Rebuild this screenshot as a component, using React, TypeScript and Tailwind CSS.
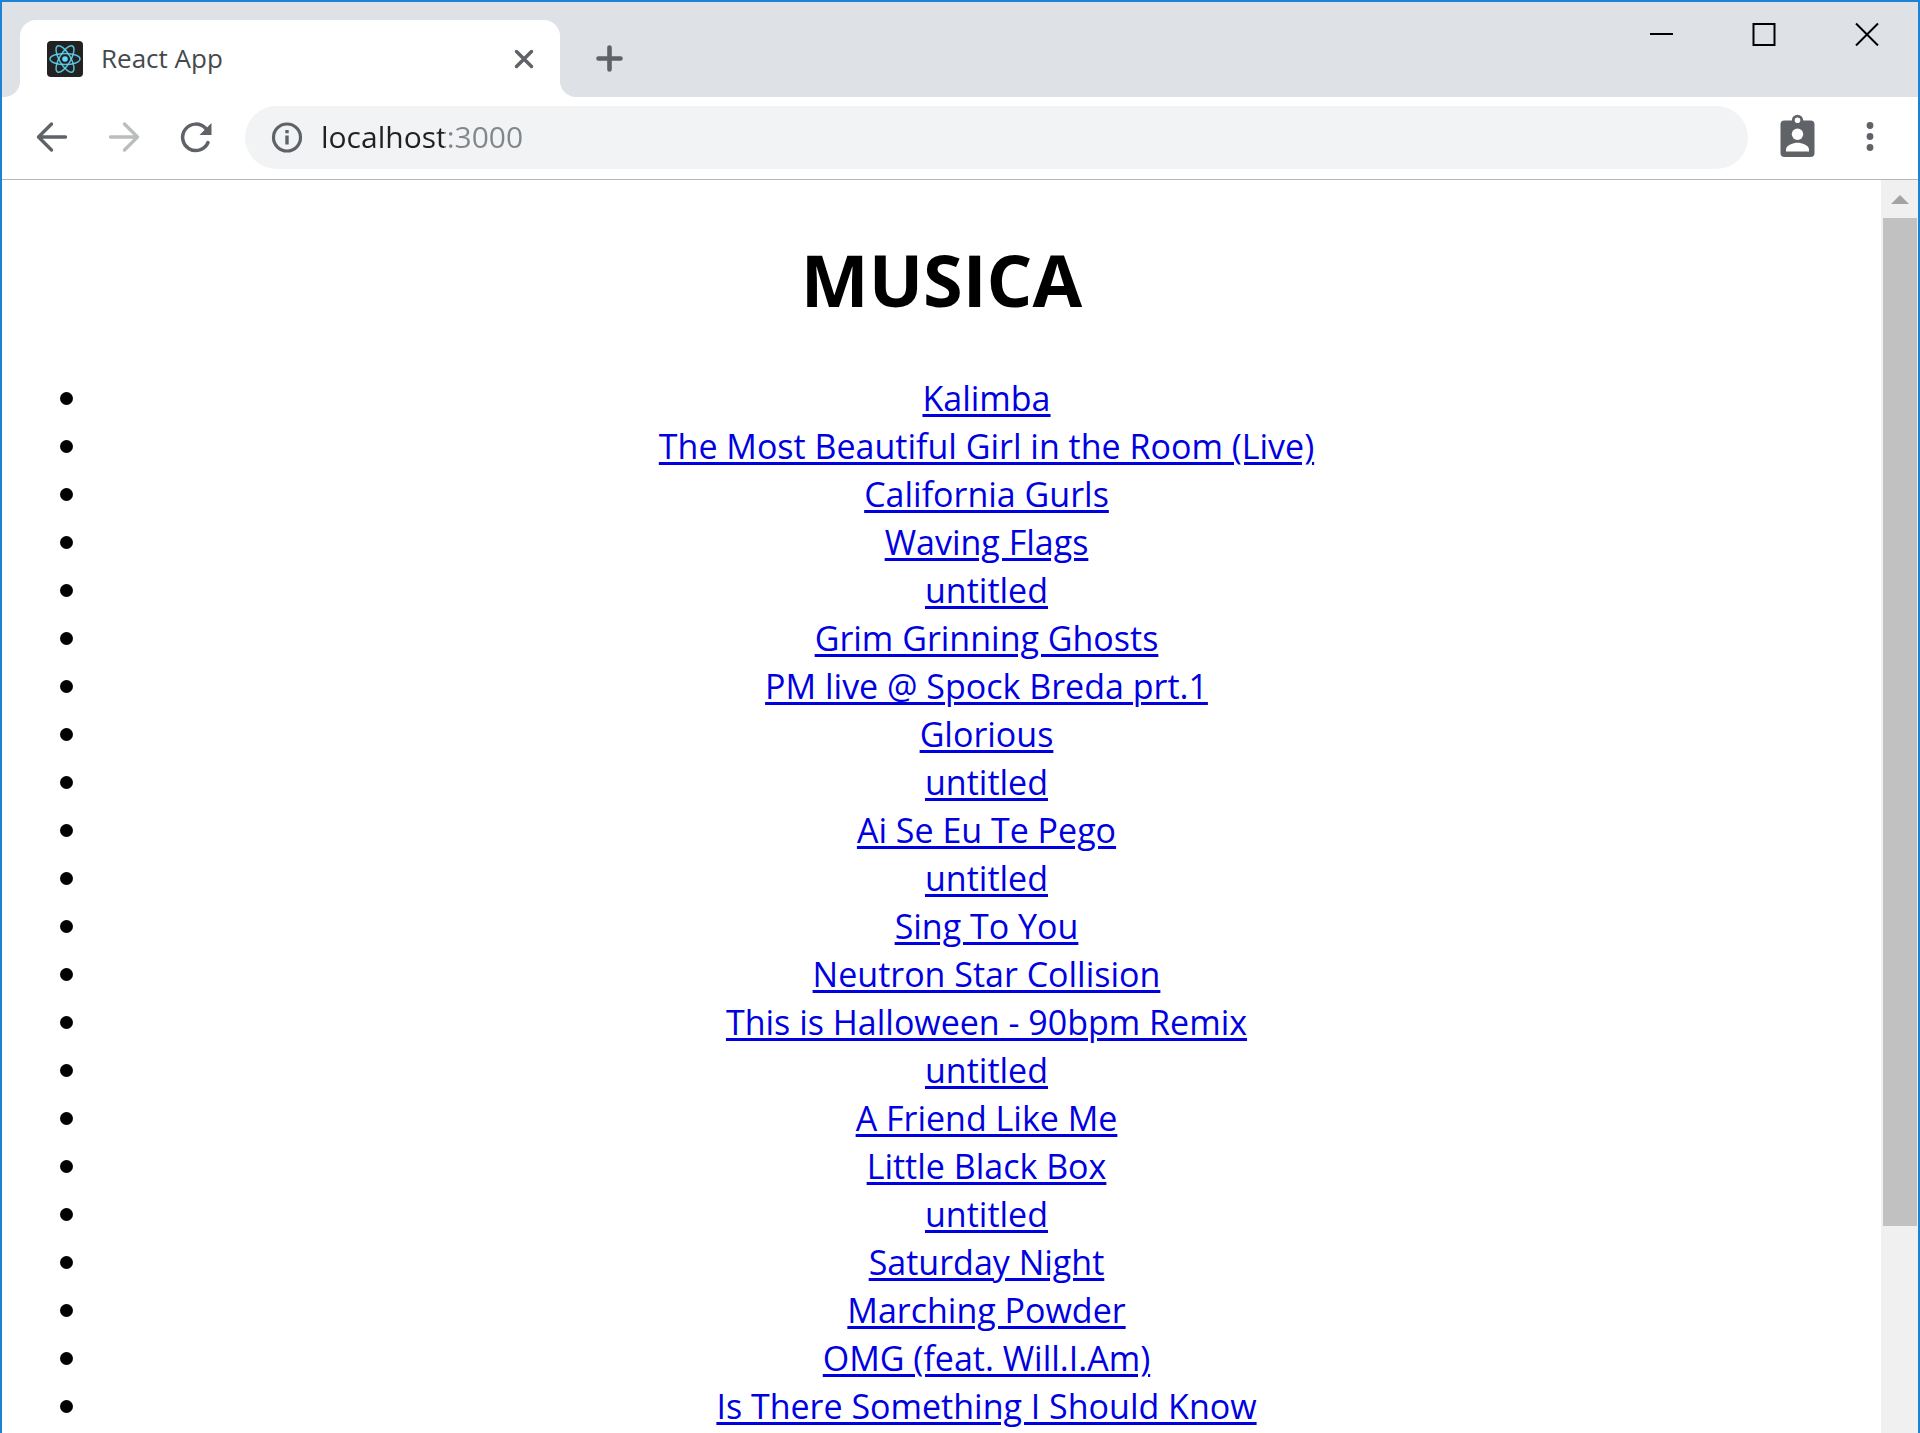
const songs = [
  'Kalimba',
  'The Most Beautiful Girl in the Room (Live)',
  'California Gurls',
  'Waving Flags',
  'untitled',
  'Grim Grinning Ghosts',
  'PM live @ Spock Breda prt.1',
  'Glorious',
  'untitled',
  'Ai Se Eu Te Pego',
  'untitled',
  'Sing To You',
  'Neutron Star Collision',
  'This is Halloween - 90bpm Remix',
  'untitled',
  'A Friend Like Me',
  'Little Black Box',
  'untitled',
  'Saturday Night',
  'Marching Powder',
  'OMG (feat. Will.I.Am)',
  'Is There Something I Should Know',
]

function ReactIcon() {
  return (
    <svg viewBox="0 0 36 36" className="size-9 shrink-0" aria-hidden="true">
      <rect width="36" height="36" rx="4" fill="#222222" />
      <g fill="none" stroke="#61dafb" strokeOpacity="0.85" strokeWidth="1.5">
        <ellipse cx="18" cy="18" rx="15" ry="5.6" />
        <ellipse cx="18" cy="18" rx="15" ry="5.6" transform="rotate(60 18 18)" />
        <ellipse cx="18" cy="18" rx="15" ry="5.6" transform="rotate(120 18 18)" />
      </g>
      <circle cx="18" cy="18" r="2.8" fill="#61dafb" />
    </svg>
  )
}

function TabStrip() {
  return (
    <header className="flex h-[95px] items-start bg-[#dee1e6]">
      <div className="w-[18px] self-stretch bg-white">
        <div className="h-full rounded-br-2xl bg-[#dee1e6]" />
      </div>
      <div className="flex flex-1 self-stretch bg-[linear-gradient(to_right,white_560px,#dee1e6_560px)]">
        <div className="w-[540px] bg-[#dee1e6] pt-[18px]">
          <div className="flex h-full items-center rounded-t-2xl bg-white pr-6 pl-[27px]">
            <ReactIcon />
            <span className="ml-[18px] flex-1 pb-0.5 text-[26px] leading-9 text-[#45494d]">React App</span>
            <button aria-label="Close tab" className="flex size-6 items-center justify-center">
              <svg viewBox="0 0 24 24" className="size-6" stroke="#5f6368" strokeWidth="3.500" strokeLinecap="round">
                <path d="M4.500 4.500l15 15M19.500 4.500l-15 15" />
              </svg>
            </button>
          </div>
        </div>
        <div className="flex flex-1 justify-between rounded-bl-2xl bg-[#dee1e6]">
          <button aria-label="New tab" className="mt-[41px] ml-[33px] size-8">
            <svg viewBox="0 0 32 32" className="size-8" stroke="#5f6368" strokeWidth="4.600" strokeLinecap="round">
              <path d="M16.500 4.500v22M5.500 15.500h22" />
            </svg>
          </button>
          <div className="flex h-16">
            <button aria-label="Minimize" className="flex w-[103px] items-center justify-center">
              <svg viewBox="0 0 24 24" className="size-6" fill="none" stroke="#000" strokeWidth="2">
                <path d="M0 12h23" />
              </svg>
            </button>
            <button aria-label="Maximize" className="flex w-[103px] items-center justify-center">
              <svg viewBox="0 0 24 24" className="size-6 overflow-visible" fill="none" stroke="#000" strokeWidth="2">
                <rect x="0.5" y="2" width="21" height="21" />
              </svg>
            </button>
            <button aria-label="Close window" className="flex w-[102px] items-center justify-center">
              <svg viewBox="0 0 24 24" className="size-6" fill="none" stroke="#000" strokeWidth="2">
                <path d="M1 1.500l22 22M23 1.500l-22 22" />
              </svg>
            </button>
          </div>
        </div>
      </div>
    </header>
  )
}

function Toolbar() {
  return (
    <nav className="flex h-[83px] items-center border-b border-[#b4b6b8] bg-white pb-0.5 pl-[30px]">
      <button aria-label="Back" className="size-10">
        <svg viewBox="0 0 40 40" className="size-10" fill="none" stroke="#5f6368" strokeWidth="3.400" strokeLinecap="round" strokeLinejoin="round">
          <path d="M33.500 20H7M19.500 7L6.500 20l13 13" />
        </svg>
      </button>
      <button aria-label="Forward" disabled className="ml-8 size-10">
        <svg viewBox="0 0 40 40" className="size-10" fill="none" stroke="#babcbe" strokeWidth="3.400" strokeLinecap="round" strokeLinejoin="round">
          <path d="M6.500 20H33M20.500 7l13 13-13 13" />
        </svg>
      </button>
      <button aria-label="Reload" className="ml-8 size-10">
        <svg viewBox="0 0 40 40" className="size-10" fill="none">
          <path d="M32 25.500A13.200 13.200 0 1 1 29.500 11.300" stroke="#5f6368" strokeWidth="3.500" strokeLinecap="round" />
          <path d="M35.500 6v12H23.500z" fill="#5f6368" />
        </svg>
      </button>
      <div className="ml-[29px] flex h-[63px] flex-1 items-center rounded-full bg-[#f1f3f4] pl-6">
        <button aria-label="View site information" className="size-9">
          <svg viewBox="0 0 36 36" className="size-9" fill="none">
            <circle cx="18" cy="18.500" r="13.500" stroke="#5f6368" strokeWidth="3.200" />
            <path d="M18 16.500v9M18 11v3.300" stroke="#5f6368" strokeWidth="3.400" />
          </svg>
        </button>
        <input
          aria-label="Address"
          defaultValue="localhost:3000"
          className="ml-4 min-w-0 flex-1 bg-[linear-gradient(to_right,#202124_123px,#80868b_123px)] bg-clip-text text-[30px] leading-10 text-transparent caret-black outline-none"
        />
      </div>
      <button aria-label="Profile" className="ml-7 size-11">
        <svg viewBox="0 0 44 44" className="size-11 overflow-visible" fill="#5f6368">
          <rect x="4.500" y="5.500" width="34" height="36.500" rx="4" />
          <circle cx="21.500" cy="5.300" r="5.600" />
          <g fill="#fff">
            <circle cx="21.500" cy="5.300" r="2.800" />
            <circle cx="21.500" cy="19.300" r="5.700" />
            <path d="M10 36.500h23v-2c0-4.500-7.500-6.800-11.500-6.800S10 30 10 34.500z" />
          </g>
        </svg>
      </button>
      <button aria-label="Menu" className="mr-[26px] ml-8 size-10">
        <svg viewBox="0 0 40 40" className="size-10" fill="#5f6368">
          <circle cx="18" cy="8.500" r="3.400" />
          <circle cx="18" cy="19.500" r="3.400" />
          <circle cx="18" cy="30.500" r="3.400" />
        </svg>
      </button>
    </nav>
  )
}

function Scrollbar() {
  return (
    <div aria-hidden="true" className="flex w-[37px] flex-col bg-[#f0f0f0]">
      <div className="flex h-[38px] items-center justify-center">
        <svg viewBox="0 0 18 9" className="w-[18px]" fill="#a3a3a3">
          <path d="M9 0l9 9H0z" />
        </svg>
      </div>
      <div className="flex-1 pr-px pl-0.5">
        <div className="h-[83%] bg-[#c1c1c1]" />
      </div>
    </div>
  )
}

export default function App() {
  return (
    <div className="flex h-screen flex-col overflow-hidden border-x-2 border-t-2 border-[#1e82d4] bg-white font-['Open_Sans',sans-serif]">
      <TabStrip />
      <Toolbar />
      <div className="flex min-h-0 flex-1">
        <main className="flex-1 overflow-hidden text-center text-black">
          <h1 className="mt-[51px] mb-[47px] text-[72px] leading-24 font-bold">MUSICA</h1>
          <ul className="list-disc pl-[90px] text-[34px] leading-12">
            {songs.map((song, i) => (
              <li key={i} className="marker:text-[36px]">
                <a href="#" className="text-[#0000e0] underline decoration-[3px] underline-offset-3">
                  {song}
                </a>
              </li>
            ))}
          </ul>
        </main>
        <Scrollbar />
      </div>
    </div>
  )
}
